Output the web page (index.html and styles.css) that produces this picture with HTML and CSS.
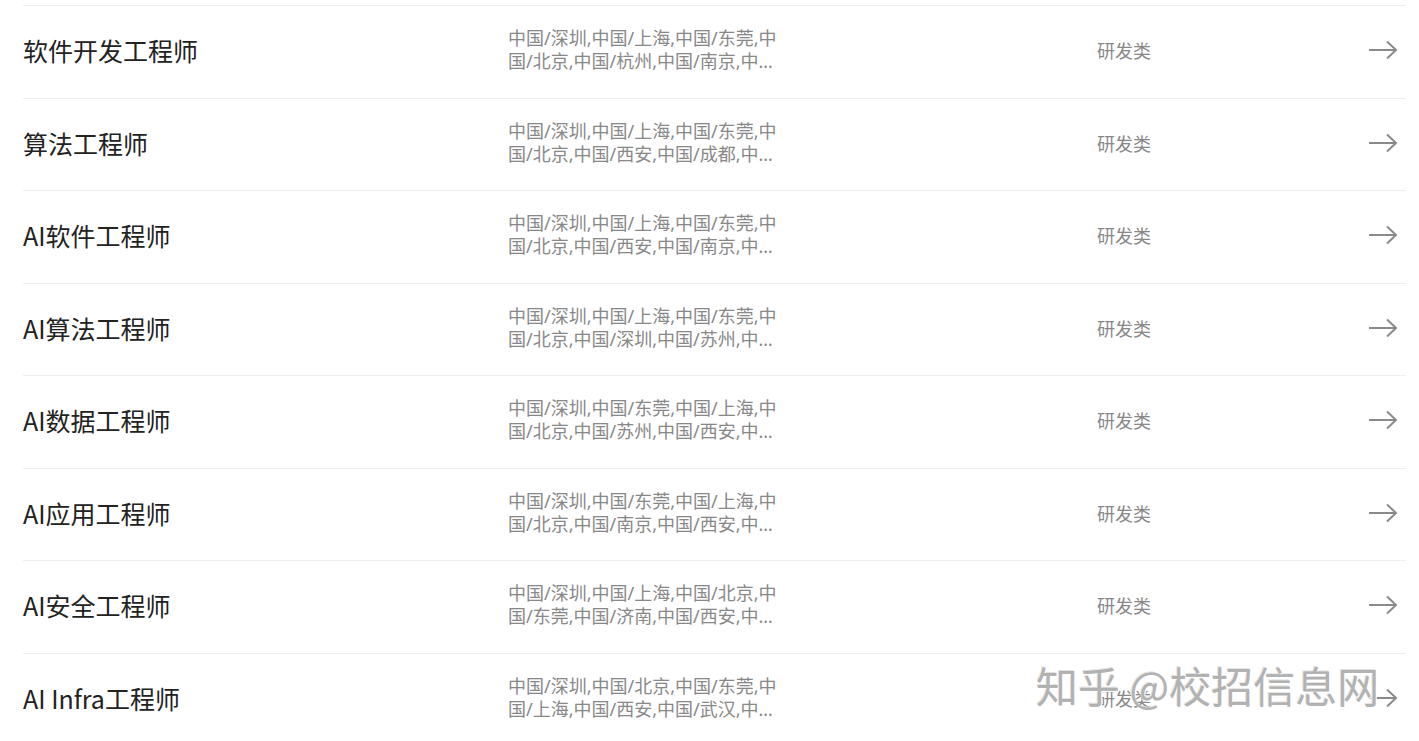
FILE: index.html
```html
<!DOCTYPE html>
<html lang="zh-CN">
<head>
  <meta charset="UTF-8" />
  <meta name="viewport" content="width=device-width, initial-scale=1.0"/>
  <title>职位列表</title>
  <link rel="stylesheet" href="styles.css">
</head>
<body>
  <div class="job-list">
    <div class="job-row">
      <div class="job-title">软件开发工程师</div>
      <div class="job-place">中国/深圳,中国/上海,中国/东莞,中国/北京,中国/杭州,中国/南京,中国/西安,中国/成都</div>
      <div class="job-type">研发类</div>
      <div class="job-go"><svg width="30" height="20" viewBox="0 0 30 20"><path d="M1 10H28M19 1.5L28 10L19 18.5" fill="none" stroke="#8a8a8a" stroke-width="2"/></svg></div>
    </div>
    <div class="job-row">
      <div class="job-title">算法工程师</div>
      <div class="job-place">中国/深圳,中国/上海,中国/东莞,中国/北京,中国/西安,中国/成都,中国/杭州,中国/南京</div>
      <div class="job-type">研发类</div>
      <div class="job-go"><svg width="30" height="20" viewBox="0 0 30 20"><path d="M1 10H28M19 1.5L28 10L19 18.5" fill="none" stroke="#8a8a8a" stroke-width="2"/></svg></div>
    </div>
    <div class="job-row">
      <div class="job-title">AI软件工程师</div>
      <div class="job-place">中国/深圳,中国/上海,中国/东莞,中国/北京,中国/西安,中国/南京,中国/杭州,中国/成都</div>
      <div class="job-type">研发类</div>
      <div class="job-go"><svg width="30" height="20" viewBox="0 0 30 20"><path d="M1 10H28M19 1.5L28 10L19 18.5" fill="none" stroke="#8a8a8a" stroke-width="2"/></svg></div>
    </div>
    <div class="job-row">
      <div class="job-title">AI算法工程师</div>
      <div class="job-place">中国/深圳,中国/上海,中国/东莞,中国/北京,中国/深圳,中国/苏州,中国/西安,中国/南京</div>
      <div class="job-type">研发类</div>
      <div class="job-go"><svg width="30" height="20" viewBox="0 0 30 20"><path d="M1 10H28M19 1.5L28 10L19 18.5" fill="none" stroke="#8a8a8a" stroke-width="2"/></svg></div>
    </div>
    <div class="job-row">
      <div class="job-title">AI数据工程师</div>
      <div class="job-place">中国/深圳,中国/东莞,中国/上海,中国/北京,中国/苏州,中国/西安,中国/南京,中国/杭州</div>
      <div class="job-type">研发类</div>
      <div class="job-go"><svg width="30" height="20" viewBox="0 0 30 20"><path d="M1 10H28M19 1.5L28 10L19 18.5" fill="none" stroke="#8a8a8a" stroke-width="2"/></svg></div>
    </div>
    <div class="job-row">
      <div class="job-title">AI应用工程师</div>
      <div class="job-place">中国/深圳,中国/东莞,中国/上海,中国/北京,中国/南京,中国/西安,中国/杭州,中国/成都</div>
      <div class="job-type">研发类</div>
      <div class="job-go"><svg width="30" height="20" viewBox="0 0 30 20"><path d="M1 10H28M19 1.5L28 10L19 18.5" fill="none" stroke="#8a8a8a" stroke-width="2"/></svg></div>
    </div>
    <div class="job-row">
      <div class="job-title">AI安全工程师</div>
      <div class="job-place">中国/深圳,中国/上海,中国/北京,中国/东莞,中国/济南,中国/西安,中国/南京,中国/杭州</div>
      <div class="job-type">研发类</div>
      <div class="job-go"><svg width="30" height="20" viewBox="0 0 30 20"><path d="M1 10H28M19 1.5L28 10L19 18.5" fill="none" stroke="#8a8a8a" stroke-width="2"/></svg></div>
    </div>
    <div class="job-row">
      <div class="job-title">AI Infra工程师</div>
      <div class="job-place">中国/深圳,中国/北京,中国/东莞,中国/上海,中国/西安,中国/武汉,中国/南京,中国/杭州</div>
      <div class="job-type">研发类</div>
      <div class="job-go"><svg width="30" height="20" viewBox="0 0 30 20"><path d="M1 10H28M19 1.5L28 10L19 18.5" fill="none" stroke="#8a8a8a" stroke-width="2"/></svg></div>
    </div>
  </div>

  <div class="watermark">知乎 @校招信息网</div>
</body>
</html>
```

FILE: styles.css
```css
html {
  overflow: hidden;
}
body {
  margin: 0;
  background: #fff;
  font-family: "Noto Sans CJK SC", "Noto Sans", sans-serif;
  color: #222;
}
.job-list {
  margin: 5px 13px 0 23px;
  border-top: 1px solid #eee;
}
.job-row {
  display: grid;
  grid-template-columns: 485px 589px 1fr auto;
  align-items: center;
  box-sizing: content-box;
  height: 88.5px;
  padding: 0 8px 3px 0;
  border-bottom: 1px solid #eee;
}
.job-title {
  font-size: 25px;
  line-height: 32px;
}
.job-place {
  width: 272px;
  font-family: "Noto Sans", "Noto Sans CJK SC", sans-serif;
  font-size: 18px;
  line-height: 23px;
  color: #888;
  word-break: break-all;
  display: -webkit-box;
  -webkit-line-clamp: 2;
  -webkit-box-orient: vertical;
  overflow: hidden;
}
.job-type {
  font-size: 18px;
  color: #888;
}
.job-go {
  display: flex;
  align-items: center;
}
.watermark {
  position: absolute;
  left: 1036px;
  top: 654px;
  font-size: 42px;
  color: rgba(165, 165, 165, 0.85);
  text-shadow: 1px 1px 0 #fff, -1px -1px 0 #e4e4e4;
  white-space: nowrap;
}
```
